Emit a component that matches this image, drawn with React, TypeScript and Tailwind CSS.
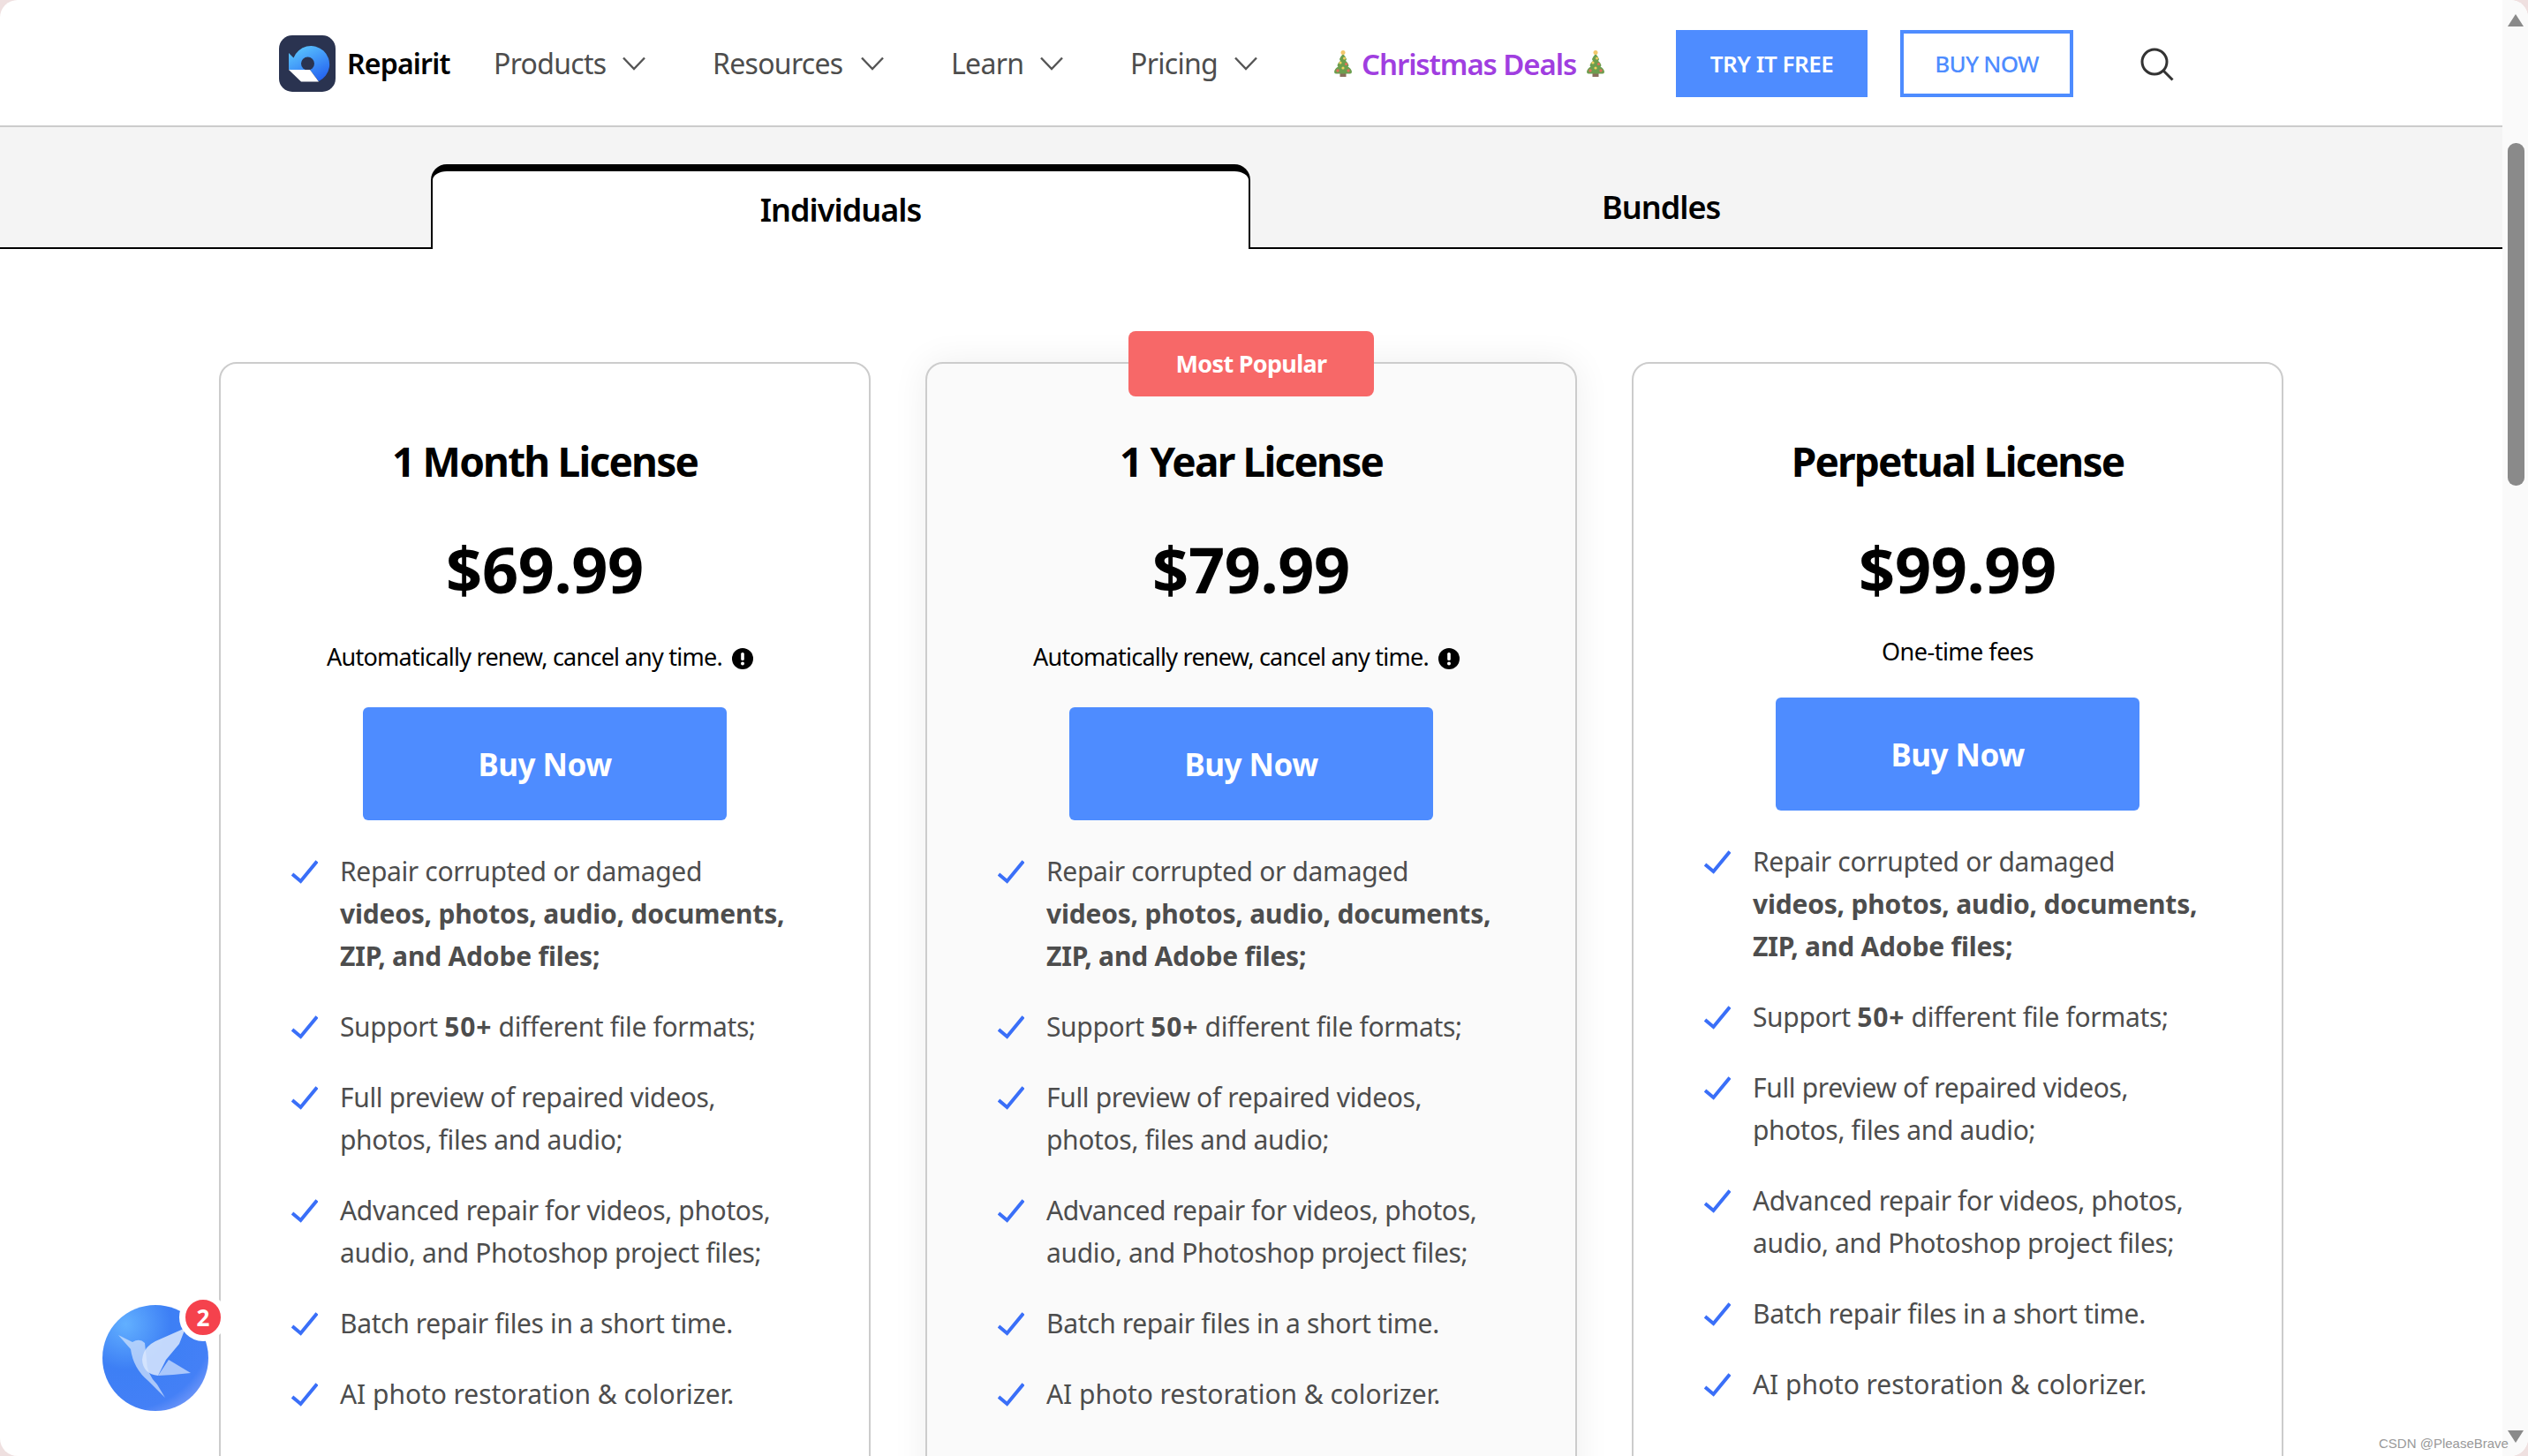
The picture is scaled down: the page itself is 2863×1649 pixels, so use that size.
import type { ReactNode } from 'react';

const font = { fontFamily: '"Noto Sans", "Open Sans", sans-serif' };

function Logo() {
  return (
    <svg viewBox="0 0 64 64" className="w-[64px] h-[64px] shrink-0">
      <defs>
        <linearGradient id="logoRing" x1="0.2" y1="0" x2="0.8" y2="1">
          <stop offset="0" stopColor="#5cc8ff" />
          <stop offset="1" stopColor="#2360f0" />
        </linearGradient>
      </defs>
      <rect width="64" height="64" rx="15" fill="#2a3350" />
      <path
        d="M11 20 L16.5 25.5 A21 21 0 1 1 45 52 L35 39 L11 39 Z"
        fill="url(#logoRing)"
      />
      <circle cx="32.5" cy="32" r="7.5" fill="#2a3350" />
      <path d="M11 39 L35 39 L45 52.5 L25 52.5 Z" fill="#ffffff" />
    </svg>
  );
}

function Chevron() {
  return (
    <svg viewBox="0 0 26 16" className="w-[26px] h-[16px] shrink-0" fill="none" stroke="#555555" strokeWidth="2.4">
      <path d="M1 1.5 L13 14 L25 1.5" />
    </svg>
  );
}

function Tree() {
  return (
    <svg viewBox="0 0 22 32" className="w-[22px] h-[32px] shrink-0">
      <rect x="7.5" y="26" width="7" height="5" fill="#8a6f5c" />
      <path d="M11 5 Q14 8 15 11 Q14.5 12.5 14 13 Q17 15 17.5 18 Q17 19 16.5 19.5 Q20 21 21 25 Q21 27.5 19 27.5 L3 27.5 Q1 27.5 1 25 Q2 21 5.5 19.5 Q5 19 4.5 18 Q5 15 8 13 Q7.5 12.5 7 11 Q8 8 11 5 Z" fill="#6c9e4e" />
      <circle cx="11" cy="3.5" r="2.5" fill="#f2c76b" />
      <circle cx="12.5" cy="10" r="1.5" fill="#f0d060" />
      <circle cx="8" cy="15" r="1.6" fill="#f0d060" />
      <circle cx="14.5" cy="16.5" r="1.6" fill="#e2705a" />
      <circle cx="11" cy="21" r="1.6" fill="#f0d060" />
      <circle cx="5" cy="24" r="1.7" fill="#e2705a" />
      <circle cx="17" cy="24" r="1.7" fill="#e2705a" />
    </svg>
  );
}

function Check() {
  return (
    <svg viewBox="0 0 30 27" className="w-[30px] h-[27px] shrink-0 mt-[11px]" fill="none" stroke="#3a6ff8" strokeWidth="4">
      <path d="M1 16 L10.5 24 L29 1.5" />
    </svg>
  );
}

function InfoDot() {
  return (
    <svg viewBox="0 0 24 24" className="w-[24px] h-[24px] shrink-0 mt-[4px]">
      <circle cx="12" cy="12" r="12" fill="#000000" />
      <rect x="10.2" y="5" width="3.6" height="9" rx="1.6" fill="#ffffff" />
      <circle cx="12" cy="17.6" r="2" fill="#ffffff" />
    </svg>
  );
}

function Bird() {
  return (
    <svg viewBox="0 0 120 120" className="absolute left-[116px] top-[1478px] w-[120px] h-[120px]">
      <defs>
        <radialGradient id="birdBg" cx="0.22" cy="0.18" r="0.95">
          <stop offset="0" stopColor="#62b0ff" />
          <stop offset="0.45" stopColor="#3d7ff5" />
          <stop offset="0.85" stopColor="#4480f6" />
          <stop offset="1" stopColor="#6f96f8" />
        </radialGradient>
      </defs>
      <circle cx="60" cy="60" r="60" fill="url(#birdBg)" />
      <path d="M18 34 L34 42 Q42 37 48 43 L50 62 Q50 78 62 90 L71 105 L52 86 Q35 72 32 50 Z" fill="#cfe0fb" opacity="0.75" />
      <path d="M94 26 L87 44 L72 62 L63 80 Q46 78 45 62 Q46 48 60 41 Z" fill="#dbe8fd" opacity="0.85" />
      <path d="M75 62 L100 77 L80 79 L63 80 Z" fill="#bcd4fb" opacity="0.85" />
    </svg>
  );
}

function NavItem({ label, width }: { label: string; width: string }) {
  return (
    <div className={`flex items-center justify-between shrink-0 ${width}`}>
      <span className="text-[32px] text-[#4d4d4d] tracking-[-0.7px] leading-none whitespace-nowrap">{label}</span>
      <Chevron />
    </div>
  );
}

interface Plan {
  title: string;
  price: string;
  renew: boolean;
  popular?: boolean;
}

const plans: Plan[] = [
  { title: '1 Month License', price: '$69.99', renew: true },
  { title: '1 Year License', price: '$79.99', renew: true, popular: true },
  { title: 'Perpetual License', price: '$99.99', renew: false },
];

const features: ReactNode[][] = [
  [
    'Repair corrupted or damaged',
    <b className="font-bold tracking-[-0.2px]">videos, photos, audio, documents,</b>,
    <b className="font-bold tracking-[-0.2px]">ZIP, and Adobe files;</b>,
  ],
  [
    <>
      Support <b className="font-bold tracking-[0.8px]">50+</b> different file formats;
    </>,
  ],
  ['Full preview of repaired videos,', 'photos, files and audio;'],
  ['Advanced repair for videos, photos,', 'audio, and Photoshop project files;'],
  ['Batch repair files in a short time.'],
  [<span className="tracking-[-0.05px]">AI photo restoration &amp; colorizer.</span>],
];

function PlanCard({ plan }: { plan: Plan }) {
  return (
    <div
      className={`relative w-[738px] h-[1400px] shrink-0 rounded-[20px] border-2 border-[#cccccc] flex flex-col items-center pt-[80px] ${
        plan.popular ? 'bg-[#fafafa] shadow-[0_0_40px_rgba(0,0,0,0.07)]' : 'bg-white'
      }`}
    >
      {plan.popular && (
        <div className="absolute left-[228px] -top-[37px] w-[278px] h-[74px] rounded-[8px] bg-[#f76868] flex items-center justify-center text-white font-bold text-[27px] tracking-[-0.7px]">
          Most Popular
        </div>
      )}
      <h2 className="text-[46px] leading-[60px] font-bold text-black tracking-[-1.8px] whitespace-nowrap">{plan.title}</h2>
      <div className="mt-[52px] text-[72px] leading-[80px] font-bold text-black tracking-[-0.4px]">{plan.price}</div>
      {plan.renew ? (
        <div className="mt-[36px] mr-[11px] h-[48px] flex items-center gap-[11px] text-[27px] text-black tracking-[-0.75px] whitespace-nowrap">
          Automatically renew, cancel any time.
          <InfoDot />
        </div>
      ) : (
        <div className="mt-[30px] h-[48px] flex items-center text-[27px] text-black tracking-[-0.5px]">One-time fees</div>
      )}
      <button
        className={`w-[412px] h-[128px] shrink-0 rounded-[6px] bg-[#4e8cff] text-white font-bold text-[35px] tracking-[-0.5px] pt-[2px] ${
          plan.renew ? 'mt-[33px]' : 'mt-[28px]'
        }`}
      >
        Buy Now
      </button>
      <ul className="self-start ml-[80px] mt-[34px] flex flex-col gap-[32px]">
        {features.map((lines, i) => (
          <li key={i} className="flex gap-[25px]">
            <Check />
            <div className="text-[30px] leading-[48px] text-[#4d4d4d] tracking-[-0.35px] whitespace-nowrap">
              {lines.map((line, j) => (
                <div key={j}>{line}</div>
              ))}
            </div>
          </li>
        ))}
      </ul>
    </div>
  );
}

export default function App() {
  return (
    <div className="relative w-[2863px] h-[1649px] overflow-hidden bg-[#efe0e0]" style={font}>
      <div className="w-full h-full rounded-[20px] overflow-hidden bg-white flex">
        <main className="w-[2834px] shrink-0">
          <header className="h-[144px] border-b-2 border-[#cccccc] flex items-center pl-[316px] pt-[2px]">
            <Logo />
            <span className="ml-[13px] text-[32px] font-semibold text-black tracking-[-0.8px] w-[166px] shrink-0">Repairit</span>
            <NavItem label="Products" width="w-[172px]" />
            <div className="w-[76px] shrink-0" />
            <NavItem label="Resources" width="w-[194px]" />
            <div className="w-[76px] shrink-0" />
            <NavItem label="Learn" width="w-[127px]" />
            <div className="w-[76px] shrink-0" />
            <NavItem label="Pricing" width="w-[144px]" />
            <div className="w-[86px] shrink-0" />
            <div className="flex items-center gap-[10px] shrink-0">
              <Tree />
              <span className="text-[33px] font-semibold text-[#a03ee0] tracking-[-1.1px] leading-none whitespace-nowrap w-[244px]">Christmas Deals</span>
              <Tree />
            </div>
            <button className="ml-[80px] w-[217px] h-[76px] shrink-0 bg-[#4e8cff] text-white text-[26px] font-semibold tracking-[-0.5px]">TRY IT FREE</button>
            <button className="ml-[37px] w-[196px] h-[76px] shrink-0 border-4 border-[#4e8cff] text-[#4e8cff] text-[26px] font-medium tracking-[-0.8px]">BUY NOW</button>
            <svg viewBox="0 0 38 38" className="ml-[76px] mt-[2px] w-[38px] h-[38px] shrink-0" fill="none" stroke="#333333" strokeWidth="3">
              <circle cx="16" cy="16" r="14" />
              <path d="M26 26 L36.5 36.5" />
            </svg>
          </header>

          <div className="h-[138px] bg-[#f4f4f4] flex items-end">
            <div className="w-[488px] h-[2px] bg-black shrink-0" />
            <div className="w-[928px] h-[96px] shrink-0 bg-white border-t-[8px] border-x-2 border-black rounded-t-[18px] flex items-center justify-center text-[36px] font-semibold text-black tracking-[-1px]">
              Individuals
            </div>
            <div className="flex-1 h-full border-b-2 border-black flex items-center pt-[46px]">
              <span className="ml-[398px] text-[36px] font-semibold text-black tracking-[-1px]">Bundles</span>
            </div>
          </div>

          <section className="flex justify-center gap-[62px] pt-[128px]">
            {plans.map((p) => (
              <PlanCard key={p.title} plan={p} />
            ))}
          </section>
        </main>

        <div className="relative flex-1 bg-[#fafafa]">
          <div className="absolute left-[6px] top-[16px] w-0 h-0 border-x-[9px] border-x-transparent border-b-[14px] border-b-[#8a8a8a]" />
          <div className="absolute left-[6px] top-[162px] w-[19px] h-[388px] rounded-[9px] bg-[#8a8a8a]" />
          <div className="absolute left-[6px] top-[1620px] w-0 h-0 border-x-[9px] border-x-transparent border-t-[14px] border-t-[#8a8a8a]" />
        </div>
      </div>

      <Bird />
      <div className="absolute left-[203px] top-[1465px] w-[54px] h-[54px] rounded-full bg-[#f5424d] border-[7px] border-white flex items-center justify-center text-white font-bold text-[26px] leading-none">
        2
      </div>
      <div className="absolute left-[2694px] top-[1624px] text-[15px] text-[#999999] whitespace-nowrap" style={{ fontFamily: '"Liberation Sans", sans-serif' }}>
        CSDN @PleaseBrave
      </div>
    </div>
  );
}
